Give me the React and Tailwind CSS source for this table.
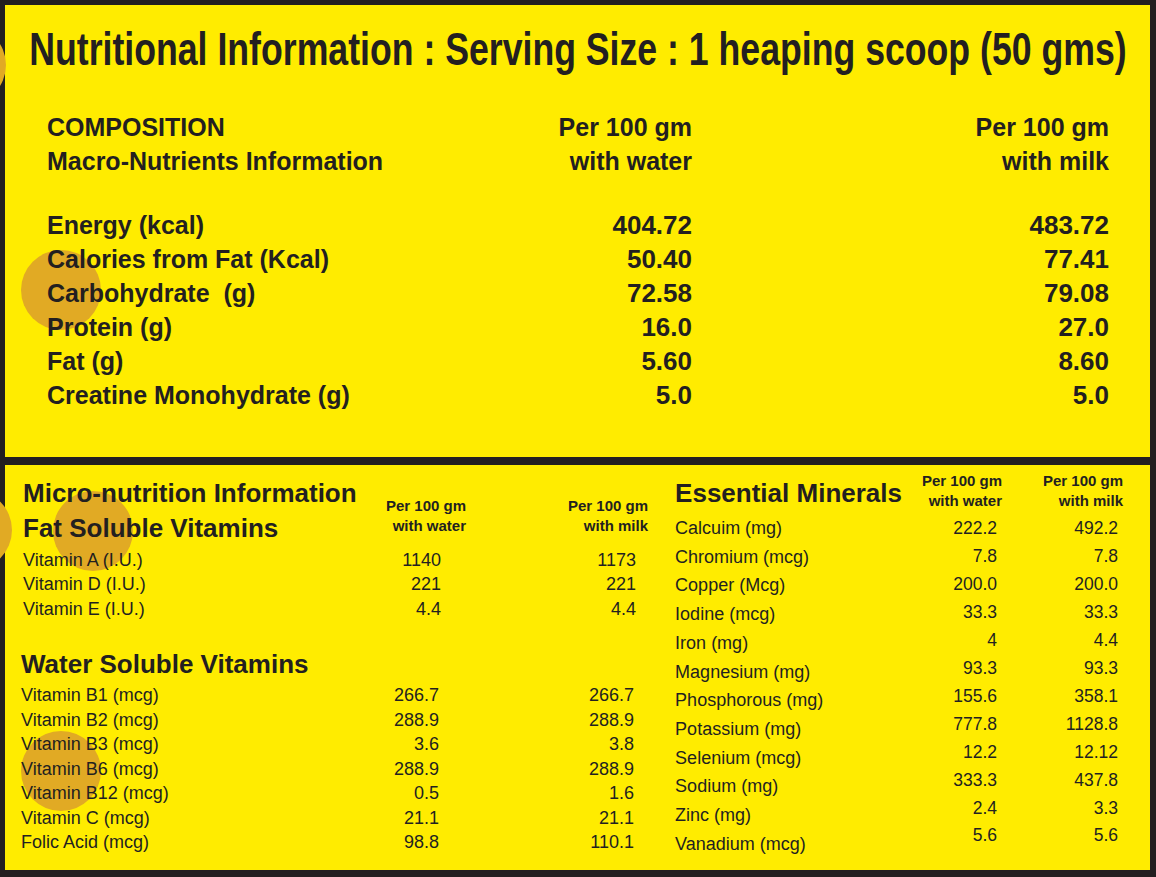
import React from 'react';

const topRows = [
  ['Energy (kcal)', '404.72', '483.72'],
  ['Calories from Fat (Kcal)', '50.40', '77.41'],
  ['Carbohydrate\u00a0 (g)', '72.58', '79.08'],
  ['Protein (g)', '16.0', '27.0'],
  ['Fat (g)', '5.60', '8.60'],
  ['Creatine Monohydrate (g)', '5.0', '5.0'],
];

const fatVitamins = [
  ['Vitamin A (I.U.)', '1140', '1173'],
  ['Vitamin D (I.U.)', '221', '221'],
  ['Vitamin E (I.U.)', '4.4', '4.4'],
];

const waterVitamins = [
  ['Vitamin B1 (mcg)', '266.7', '266.7'],
  ['Vitamin B2 (mcg)', '288.9', '288.9'],
  ['Vitamin B3 (mcg)', '3.6', '3.8'],
  ['Vitamin B6 (mcg)', '288.9', '288.9'],
  ['Vitamin B12 (mcg)', '0.5', '1.6'],
  ['Vitamin C (mcg)', '21.1', '21.1'],
  ['Folic Acid (mcg)', '98.8', '110.1'],
];

const minerals = [
  ['Calcuim (mg)', '222.2', '492.2'],
  ['Chromium (mcg)', '7.8', '7.8'],
  ['Copper (Mcg)', '200.0', '200.0'],
  ['Iodine (mcg)', '33.3', '33.3'],
  ['Iron (mg)', '4', '4.4'],
  ['Magnesium (mg)', '93.3', '93.3'],
  ['Phosphorous (mg)', '155.6', '358.1'],
  ['Potassium (mg)', '777.8', '1128.8'],
  ['Selenium (mcg)', '12.2', '12.12'],
  ['Sodium (mg)', '333.3', '437.8'],
  ['Zinc (mg)', '2.4', '3.3'],
  ['Vanadium (mcg)', '5.6', '5.6'],
];

const SmallHead = ({ second }) => (
  <div className="text-[15px] font-bold leading-[20px] text-right whitespace-nowrap">
    <div>Per 100 gm</div>
    <div>{second}</div>
  </div>
);

const VitaminRows = ({ rows }) => (
  <>
    {rows.map(([name, water, milk]) => (
      <div key={name} className="grid grid-cols-[355px_90px_182px] text-[18px] leading-[24.5px]">
        <div className="whitespace-nowrap">{name}</div>
        <div className="text-right pr-[27px]">{water}</div>
        <div className="text-right pr-[14px]">{milk}</div>
      </div>
    ))}
  </>
);

const App = () => {
  return (
    <div className="relative w-[1156px] h-[877px] overflow-hidden bg-[#231f20] pt-[5px] pl-[5px] pr-[6px] pb-[7px] text-[#231f20] font-['Liberation_Sans',Arial,sans-serif]">
      {/* orange dots */}
      <div className="absolute left-[-74px] top-[25px] w-[80px] h-[80px] rounded-full bg-[#e1aa24]"></div>
      <div className="absolute left-[21px] top-[250px] w-[80px] h-[80px] rounded-full bg-[#e1aa24]"></div>
      <div className="absolute left-[-68px] top-[490px] w-[80px] h-[80px] rounded-full bg-[#e1aa24]"></div>
      <div className="absolute left-[53px] top-[491px] w-[80px] h-[80px] rounded-full bg-[#e1aa24]"></div>
      <div className="absolute left-[21px] top-[731px] w-[80px] h-[80px] rounded-full bg-[#e1aa24]"></div>

      {/* top panel */}
      <div className="h-[452px] bg-[#ffec00]">
        <div className="relative pt-[18.5px] pl-[42px] pr-[41px]">
          <h1 className="flex justify-center text-[46px] leading-[50px] font-bold whitespace-nowrap">
            <span className="shrink-0 inline-block origin-center scale-x-[0.775]">
              Nutritional Information : Serving Size : 1 heaping scoop (50 gms)
            </span>
          </h1>

          <div className="mt-[36.5px] grid grid-cols-[505px_140px_1fr] text-[25px] font-bold leading-[34px]">
            <div className="whitespace-nowrap">
              <div>COMPOSITION</div>
              <div>Macro-Nutrients Information</div>
            </div>
            <div className="text-right whitespace-nowrap">
              <div>Per 100 gm</div>
              <div>with water</div>
            </div>
            <div className="text-right whitespace-nowrap">
              <div>Per 100 gm</div>
              <div>with milk</div>
            </div>
          </div>

          <div className="mt-[31px]">
            {topRows.map(([name, water, milk]) => (
              <div key={name} className="grid grid-cols-[505px_140px_1fr] font-bold leading-[33.9px]">
                <div className="text-[25px] whitespace-nowrap">{name}</div>
                <div className="text-[26px] text-right">{water}</div>
                <div className="text-[26px] text-right">{milk}</div>
              </div>
            ))}
          </div>
        </div>
      </div>

      <div className="h-[8px]"></div>

      {/* bottom panel */}
      <div className="h-[405px] bg-[#ffec00]">
        <div className="relative flex h-full">
          {/* vitamins */}
          <div className="w-[655px] pl-[16px] pt-[10.5px]">
            <div className="grid grid-cols-[355px_90px_182px]">
              <div className="pl-[2px] text-[26px] font-bold leading-[35px] whitespace-nowrap">
                <div>Micro-nutrition Information</div>
                <div>Fat Soluble Vitamins</div>
              </div>
              <div className="mt-[20.5px]">
                <SmallHead second="with water" />
              </div>
              <div className="mt-[20.5px]">
                <SmallHead second="with milk" />
              </div>
            </div>
            <div className="mt-[2px] pl-[2px]">
              <VitaminRows rows={fatVitamins} />
            </div>
            <div className="mt-[26px] text-[26px] font-bold leading-[35px] whitespace-nowrap">
              Water Soluble Vitamins
            </div>
            <div className="mt-[1px]">
              <VitaminRows rows={waterVitamins} />
            </div>
          </div>

          {/* minerals */}
          <div className="flex-1 flex pl-[17px] pr-[27px] pt-[6px]">
            <div className="flex-1">
              <div className="h-[43px] pt-[4.8px] text-[26px] font-bold leading-[35px] whitespace-nowrap">
                Essential Minerals
              </div>
              <div className="text-[18px] leading-[28.7px]">
                {minerals.map(([name]) => (
                  <div key={name} className="whitespace-nowrap">{name}</div>
                ))}
              </div>
            </div>
            <div className="w-[100px]">
              <div className="h-[43px]">
                <SmallHead second="with water" />
              </div>
              <div className="mt-[1px] pr-[5px] text-right text-[17.5px] leading-[27.95px]">
                {minerals.map(([name, water]) => (
                  <div key={name}>{water}</div>
                ))}
              </div>
            </div>
            <div className="w-[121px]">
              <div className="h-[43px]">
                <SmallHead second="with milk" />
              </div>
              <div className="mt-[1px] pr-[5px] text-right text-[17.5px] leading-[27.95px]">
                {minerals.map(([name, , milk]) => (
                  <div key={name}>{milk}</div>
                ))}
              </div>
            </div>
          </div>
        </div>
      </div>
    </div>
  );
};

export default App;
